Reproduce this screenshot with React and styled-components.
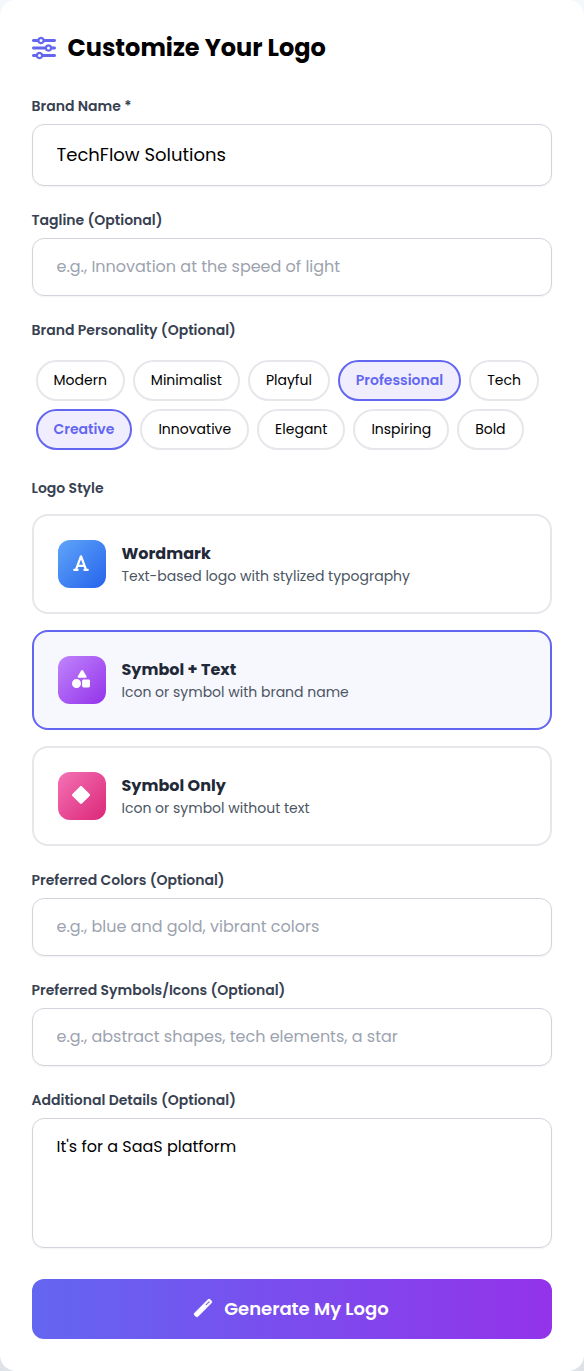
import React from "react";
import styled, { createGlobalStyle, css } from "styled-components";
import { FaSliders, FaFont, FaShapes, FaDiamond, FaWandMagic } from "react-icons/fa6";

const GlobalStyle = createGlobalStyle`
  *, *::before, *::after { box-sizing: border-box; }
  body {
    margin: 0;
    background: linear-gradient(to bottom, #f4f8fc 0, #f4f8fc 50%, #dfe3e8 100%);
    font-family: Poppins, Inter, sans-serif;
    color: #000;
  }
  input, textarea, button { font-family: inherit; color: inherit; }
`;

const Panel = styled.main`
  display: flex;
  flex-direction: column;
  height: 1371px;
  padding: 32px 32.5px 32px 31.5px;
  background: #fff;
  border-radius: 16px;
`;

const Heading = styled.h2`
  display: flex;
  align-items: center;
  gap: 12px;
  margin: 0 0 32px;
  font-size: 24px;
  line-height: 32px;
  font-weight: 700;

  svg { color: #6366f1; }
`;

const Form = styled.form`
  display: flex;
  flex-direction: column;
  gap: 24px;
`;

const Field = styled.div`
  display: flex;
  flex-direction: column;
  gap: ${(p) => p.$gap || 8}px;
`;

const Label = styled.label`
  font-size: 14px;
  line-height: 20px;
  font-weight: 600;
  color: #374151;
`;

const control = css`
  display: block;
  width: 100%;
  border: 1px solid #d1d5db;
  border-radius: 12px;
  background: #fff;
  box-shadow: 0 1px 2px rgba(0, 0, 0, 0.05);
  outline: none;

  &::placeholder { color: #9ca3af; opacity: 1; }
`;

const Input = styled.input`
  ${control}
  height: ${(p) => (p.$large ? 62 : 58)}px;
  padding: 15px 24px 17px;
  font-size: ${(p) => (p.$large ? 18 : 16)}px;
  line-height: ${(p) => (p.$large ? 28 : 24)}px;
`;

const TextArea = styled.textarea`
  ${control}
  height: 130px;
  padding: 16px 24px;
  font-size: 16px;
  line-height: 24px;
  resize: none;
`;

const Chips = styled.div`
  display: flex;
  flex-wrap: wrap;
  gap: 8px;
  padding: 4px;
`;

const Chip = styled.button`
  padding: 8px 16px;
  border: 2px solid ${(p) => (p.$active ? "#6366f1" : "#e5e7eb")};
  border-radius: 9999px;
  background: ${(p) => (p.$active ? "#f0eefe" : "#fff")};
  color: ${(p) => (p.$active ? "#6366f1" : "#000")};
  font-size: 14px;
  line-height: 21px;
  font-weight: ${(p) => (p.$active ? 600 : 400)};
`;

const Options = styled.div`
  display: flex;
  flex-direction: column;
  gap: 16px;
`;

const Option = styled.div`
  display: flex;
  align-items: center;
  gap: 16px;
  padding: 24px;
  border: 2px solid ${(p) => (p.$active ? "#6366f1" : "#e5e7eb")};
  border-radius: 16px;
  background: ${(p) => (p.$active ? "#f7f7fe" : "#fff")};
`;

const OptionIcon = styled.span`
  display: flex;
  align-items: center;
  justify-content: center;
  width: 48px;
  height: 48px;
  padding: 0 1px 1.5px 0;
  border-radius: 12px;
  background: linear-gradient(to bottom right, ${(p) => p.$from}, ${(p) => p.$to});
  color: #fff;
  font-size: 18px;
`;

const OptionTitle = styled.h4`
  margin: 0;
  font-size: 16px;
  line-height: 24px;
  font-weight: 700;
  color: #1f2937;
`;

const OptionText = styled.p`
  margin: 0;
  font-size: 14px;
  line-height: 20px;
  color: #4b5563;
`;

const Submit = styled.button`
  display: flex;
  align-items: center;
  justify-content: center;
  gap: 12px;
  margin-top: 7px;
  padding: 16px 24px;
  border: 0;
  border-radius: 12px;
  background: linear-gradient(to right, #6366f1, #9333ea);
  color: #fff;
  font-size: 18px;
  line-height: 28px;
  font-weight: 600;

  svg {
    margin-bottom: 2px;
    overflow: visible;
    stroke-width: 8px;
    stroke-linejoin: round;
  }
`;

const traits = [
  "Modern", "Minimalist", "Playful", "Professional", "Tech",
  "Creative", "Innovative", "Elegant", "Inspiring", "Bold",
];
const chosenTraits = ["Professional", "Creative"];

const styles = [
  { title: "Wordmark", text: "Text-based logo with stylized typography", Icon: FaFont, from: "#60a5fa", to: "#2563eb" },
  { title: "Symbol + Text", text: "Icon or symbol with brand name", Icon: FaShapes, from: "#c084fc", to: "#9333ea" },
  { title: "Symbol Only", text: "Icon or symbol without text", Icon: FaDiamond, from: "#f472b6", to: "#db2777" },
];
const chosenStyle = "Symbol + Text";

export default function App() {
  return (
    <>
      <GlobalStyle />
      <Panel>
        <Heading><FaSliders />Customize Your Logo</Heading>
        <Form onSubmit={(e) => e.preventDefault()}>
          <Field>
            <Label htmlFor="brand">Brand Name *</Label>
            <Input id="brand" $large defaultValue="TechFlow Solutions" />
          </Field>
          <Field>
            <Label htmlFor="tagline">Tagline (Optional)</Label>
            <Input id="tagline" placeholder="e.g., Innovation at the speed of light" />
          </Field>
          <Field $gap={16}>
            <Label as="span">Brand Personality (Optional)</Label>
            <Chips>
              {traits.map((t) => (
                <Chip key={t} type="button" $active={chosenTraits.includes(t)}>{t}</Chip>
              ))}
            </Chips>
          </Field>
          <Field $gap={16}>
            <Label as="span">Logo Style</Label>
            <Options>
              {styles.map(({ title, text, Icon, from, to }) => (
                <Option key={title} $active={title === chosenStyle}>
                  <OptionIcon $from={from} $to={to}><Icon /></OptionIcon>
                  <div>
                    <OptionTitle>{title}</OptionTitle>
                    <OptionText>{text}</OptionText>
                  </div>
                </Option>
              ))}
            </Options>
          </Field>
          <Field>
            <Label htmlFor="colors">Preferred Colors (Optional)</Label>
            <Input id="colors" placeholder="e.g., blue and gold, vibrant colors" />
          </Field>
          <Field>
            <Label htmlFor="symbols">Preferred Symbols/Icons (Optional)</Label>
            <Input id="symbols" placeholder="e.g., abstract shapes, tech elements, a star" />
          </Field>
          <Field>
            <Label htmlFor="details">Additional Details (Optional)</Label>
            <TextArea id="details" defaultValue="It's for a SaaS platform" />
          </Field>
          <Submit type="submit"><FaWandMagic />Generate My Logo</Submit>
        </Form>
      </Panel>
    </>
  );
}
